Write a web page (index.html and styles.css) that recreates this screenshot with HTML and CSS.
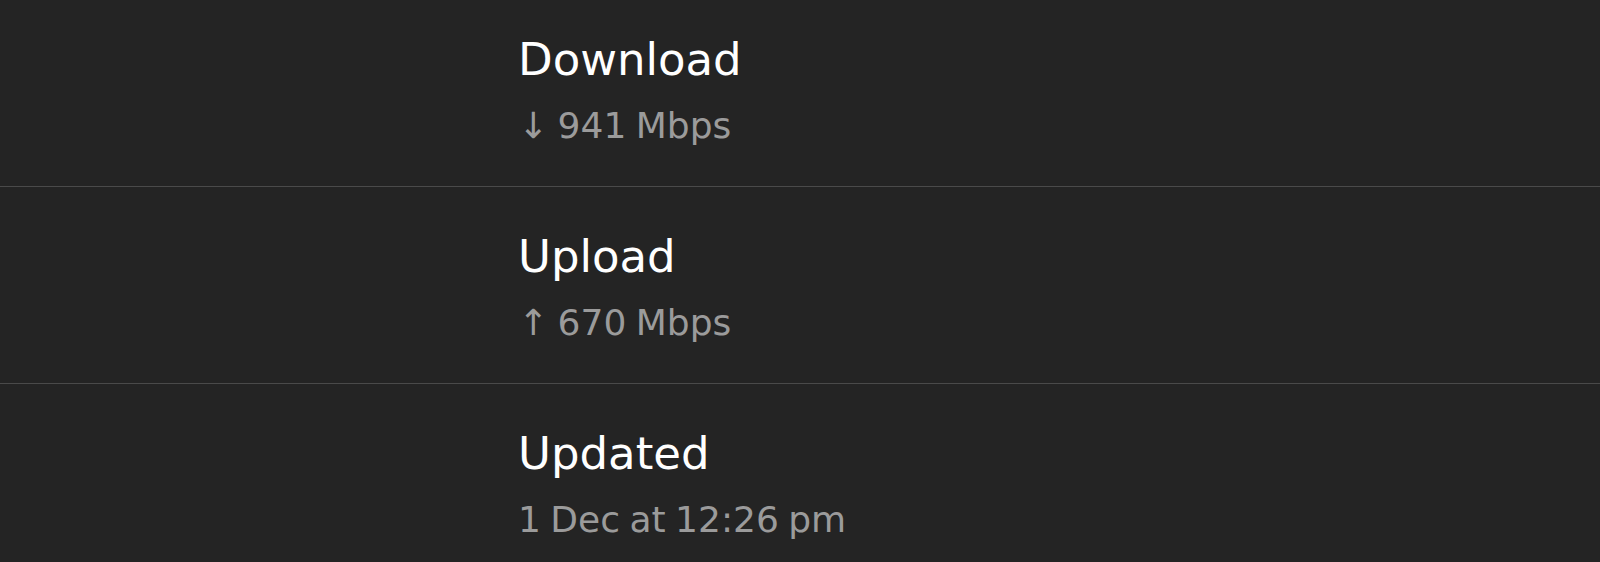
FILE: index.html
```html
<!DOCTYPE html>
<html>
<head>
<meta charset="utf-8">
<link rel="stylesheet" href="styles.css">
</head>
<body>
<div class="list">
  <div class="row">
    <div class="title">Download</div>
    <div class="value">↓ 941 Mbps</div>
  </div>
  <div class="row">
    <div class="title">Upload</div>
    <div class="value">↑ 670 Mbps</div>
  </div>
  <div class="row">
    <div class="title">Updated</div>
    <div class="value">1 Dec at 12:26 pm</div>
  </div>
</div>
</body>
</html>
```
FILE: styles.css
```css
html, body {
  margin: 0;
  padding: 0;
  background: #242424;
  overflow: hidden;
  height: 562px;
}
.list {
  margin-top: -10px;
  font-family: "DejaVu Sans", sans-serif;
}
.row {
  height: 197px;
  box-sizing: border-box;
  border-bottom: 1px solid #4a4a4a;
  padding-left: 518px;
  padding-top: 44px;
  display: flex;
  flex-direction: column;
}
.row:last-child { border-bottom: none; }
.title {
  color: #ffffff;
  font-size: 45px;
  line-height: 52px;
}
.value {
  color: #9b9b9b;
  font-size: 36px;
  line-height: 44px;
  margin-top: 18px;
  word-spacing: -2px;
}
```
